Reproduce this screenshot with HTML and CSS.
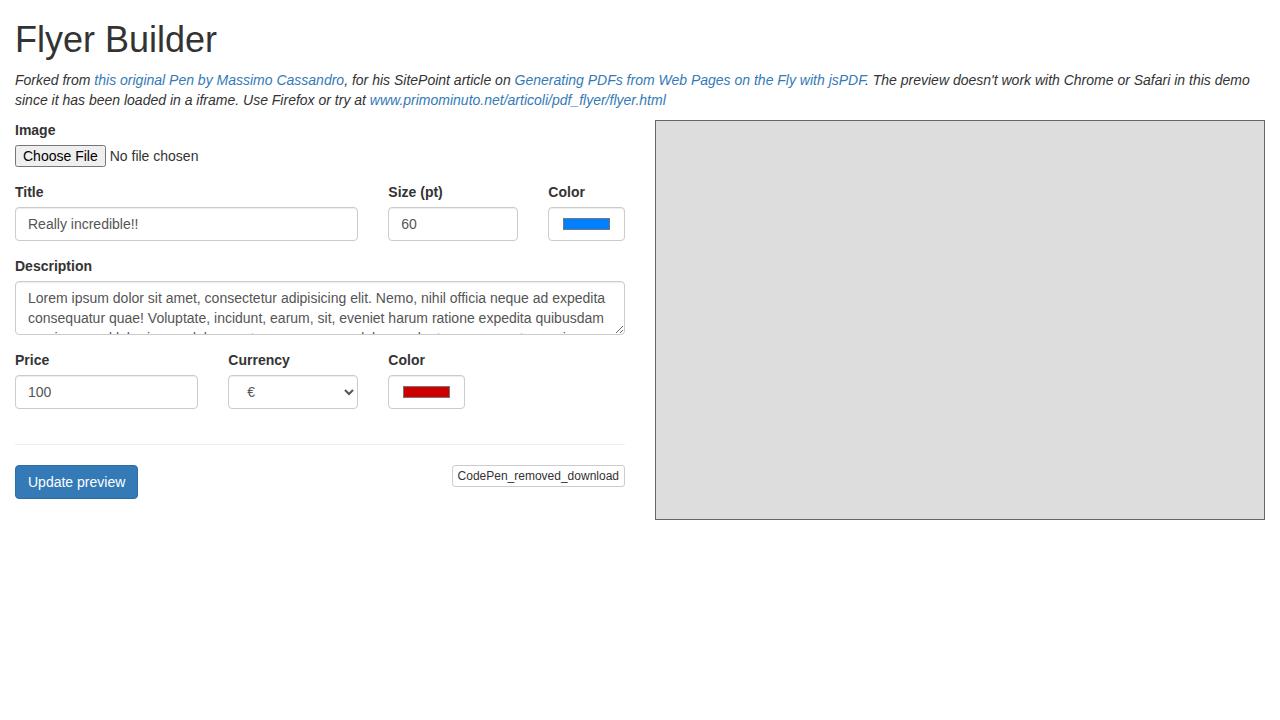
FILE: index.html
```html
<!DOCTYPE html>
<html lang="en">
<head>
    <meta charset="UTF-8">
    <meta name="viewport" content="width=device-width, initial-scale=1.0">
    <title>Flyer Builder</title>
    <link rel="stylesheet" href="styles.css">
</head>
<body>
    <div class="container">
        <h1 class="page-title">Flyer Builder</h1>
        <p class="intro">Forked from <a href="#">this original Pen by Massimo Cassandro</a>, for his SitePoint article on <a href="#">Generating PDFs from Web Pages on the Fly with jsPDF</a>. The preview doesn't work with Chrome or Safari in this demo since it has been loaded in a iframe. Use Firefox or try at <a href="#">www.primominuto.net/articoli/pdf_flyer/flyer.html</a></p>

        <div class="row">
            <!-- Form column -->
            <form class="col col-half">
                <div class="form-group">
                    <label for="image">Image</label>
                    <input type="file" id="image" class="file-input">
                </div>

                <div class="row">
                    <div class="col col-7 form-group">
                        <label for="title">Title</label>
                        <input type="text" id="title" class="form-control" value="Really incredible!!">
                    </div>
                    <div class="col col-3 form-group">
                        <label for="title-size">Size (pt)</label>
                        <input type="number" id="title-size" class="form-control" value="60">
                    </div>
                    <div class="col col-2 form-group">
                        <label for="title-color">Color</label>
                        <input type="color" id="title-color" class="form-control" value="#0080ff">
                    </div>
                </div>

                <div class="form-group">
                    <label for="description">Description</label>
                    <textarea id="description" class="form-control" rows="2">Lorem ipsum dolor sit amet, consectetur adipisicing elit. Nemo, nihil officia neque ad expedita consequatur quae! Voluptate, incidunt, earum, sit, eveniet harum ratione expedita quibusdam maxime quod laboriosam dolorem atque accusamus dolore, voluptas consequatur veniam dolor et odio.</textarea>
                </div>

                <div class="row">
                    <div class="col col-4 form-group">
                        <label for="price">Price</label>
                        <input type="number" id="price" class="form-control" value="100">
                    </div>
                    <div class="col col-3 form-group">
                        <label for="currency">Currency</label>
                        <select id="currency" class="form-control">
                            <option>€</option>
                            <option>$</option>
                            <option>£</option>
                        </select>
                    </div>
                    <div class="col col-2 form-group">
                        <label for="price-color">Color</label>
                        <input type="color" id="price-color" class="form-control" value="#cc0000">
                    </div>
                </div>

                <hr class="divider">

                <div class="actions">
                    <button type="button" class="btn btn-primary">Update preview</button>
                    <a href="#" class="btn btn-default btn-xs">CodePen_removed_download</a>
                </div>
            </form>

            <!-- Preview column -->
            <div class="col col-half">
                <div class="preview"></div>
            </div>
        </div>
    </div>
</body>
</html>
```

FILE: styles.css
```css
* {
    box-sizing: border-box;
}

body {
    margin: 0;
    font-family: "Liberation Sans", Arial, sans-serif;
    font-size: 14px;
    line-height: 20px;
    color: #333;
    background: #fff;
}

a {
    color: #337ab7;
    text-decoration: none;
}

.container {
    padding: 0 15px;
}

.page-title {
    font-size: 36px;
    font-weight: 500;
    line-height: 1.1;
    margin: 20px 0 10px;
}

.intro {
    font-style: italic;
    margin: 0 0 10px;
}

/* Grid */
.row {
    display: flex;
    margin: 0 -15px;
}

.col {
    padding: 0 15px;
    flex: none;
}

.col-half { width: 50%; }
.col-7 { width: 58.3333%; }
.col-4 { width: 33.3333%; }
.col-3 { width: 25%; }
.col-2 { width: 16.6667%; }

/* Form */
.form-group {
    margin-bottom: 15px;
}

label {
    display: inline-block;
    margin-bottom: 5px;
    font-weight: bold;
}

.file-input {
    display: block;
    font-family: inherit;
    font-size: 14px;
}

.form-control {
    display: block;
    width: 100%;
    height: 34px;
    padding: 6px 12px;
    font-family: inherit;
    font-size: 14px;
    line-height: 20px;
    color: #555;
    background: #fff;
    border: 1px solid #ccc;
    border-radius: 4px;
    box-shadow: inset 0 1px 1px rgba(0, 0, 0, 0.075);
}

textarea.form-control {
    height: auto;
    resize: vertical;
}

select.form-control {
    padding-left: 14px;
}

.divider {
    margin: 20px 0;
    border: 0;
    border-top: 1px solid #eee;
}

.actions {
    display: flex;
    justify-content: space-between;
    align-items: flex-start;
}

/* Buttons */
.btn {
    display: inline-block;
    padding: 6px 12px;
    font-family: inherit;
    font-size: 14px;
    line-height: 20px;
    border: 1px solid transparent;
    border-radius: 4px;
    cursor: pointer;
}

.btn-primary {
    color: #fff;
    background-color: #337ab7;
    border-color: #2e6da4;
}

.btn-default {
    color: #333;
    background-color: #fff;
    border-color: #ccc;
}

.btn-xs {
    padding: 1px 5px;
    font-size: 12px;
    line-height: 18px;
    border-radius: 3px;
}

/* Preview box */
.preview {
    height: 400px;
    background: #ddd;
    border: 1px solid #666;
}
```
